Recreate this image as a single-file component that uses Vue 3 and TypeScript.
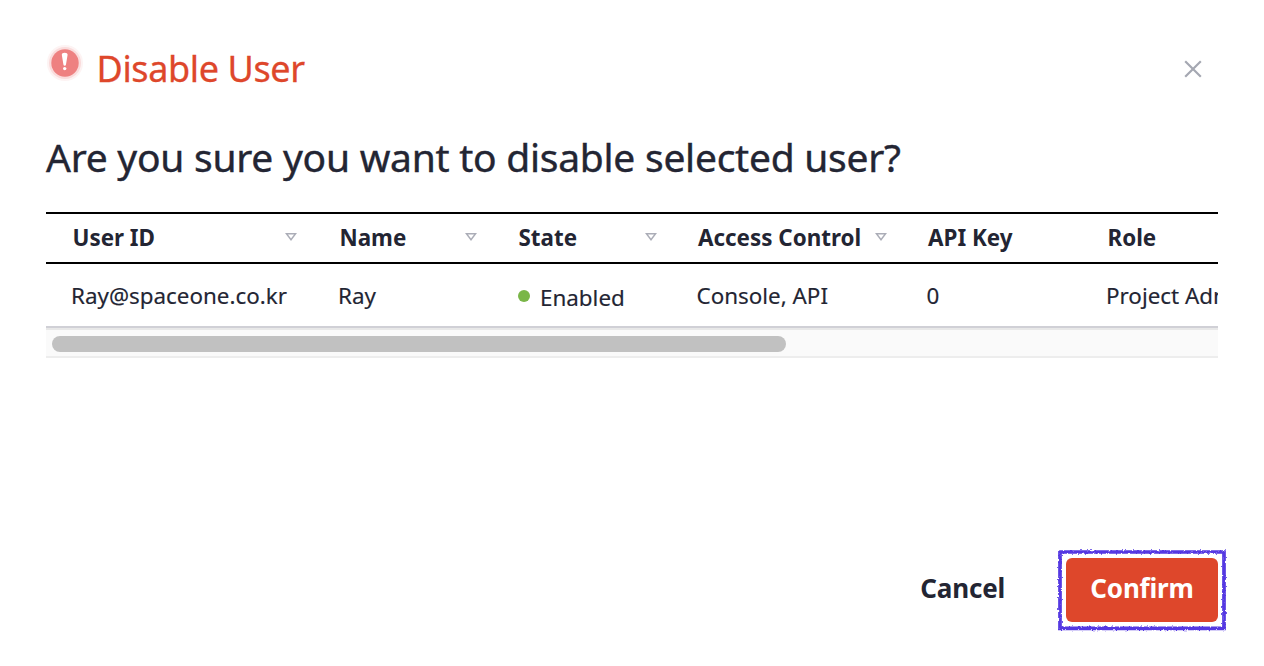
<script setup lang="ts">
interface Column {
  key: string
  label: string
  width: number
  sortable: boolean
}

const columns: Column[] = [
  { key: 'id', label: 'User ID', width: 267, sortable: true },
  { key: 'name', label: 'Name', width: 179, sortable: true },
  { key: 'state', label: 'State', width: 179.5, sortable: true },
  { key: 'access', label: 'Access Control', width: 230, sortable: true },
  { key: 'apiKey', label: 'API Key', width: 179.5, sortable: false },
  { key: 'role', label: 'Role', width: 300, sortable: false },
]

const user: Record<string, string> = {
  id: 'Ray@spaceone.co.kr',
  name: 'Ray',
  state: 'Enabled',
  access: 'Console, API',
  apiKey: '0',
  role: 'Project Admin',
}
</script>

<template>
  <section class="dialog" role="dialog">
    <header class="head">
      <svg class="alert" width="38" height="38" viewBox="0 0 38 38">
        <circle cx="19" cy="19" r="18" fill="#fdf3f3" />
        <circle cx="19" cy="19" r="16" fill="#fadcdc" />
        <circle cx="19" cy="19" r="13.7" fill="#ee8181" />
        <path d="M15.8 10.8Q15.8 8.8 18.7 8.8Q21.6 8.8 21.6 10.8L20 20.4Q19.8 21.7 18.7 21.7Q17.6 21.7 17.4 20.4Z" fill="#fff" />
        <circle cx="18.7" cy="24.6" r="1.7" fill="#fff" />
      </svg>
      <h1>Disable User</h1>
      <button class="close" aria-label="Close">
        <svg width="18" height="18" viewBox="0 0 18 18">
          <path d="M1.2 1.2L16.8 16.8M16.8 1.2L1.2 16.8" stroke="#a5a8b2" stroke-width="2.2" fill="none" />
        </svg>
      </button>
    </header>
    <h2>Are you sure you want to disable selected user?</h2>
    <div class="table">
      <div class="row labels">
        <div v-for="col in columns" :key="col.key" class="cell" :class="'label-' + col.key" :style="{ width: col.width + 'px' }">
          <span>{{ col.label }}</span>
          <svg v-if="col.sortable" class="sort" width="12" height="10" viewBox="0 0 12 10">
            <path d="M1.4 1.7H10.6L6 7.7Z" fill="none" stroke="#abadb7" stroke-width="1.5" />
          </svg>
        </div>
      </div>
      <div class="row values">
        <div v-for="col in columns" :key="col.key" class="cell" :class="col.key" :style="{ width: col.width + 'px' }">
          <i v-if="col.key === 'state'" class="dot"></i>
          <span>{{ user[col.key] }}</span>
        </div>
      </div>
      <div class="track"><div class="thumb"></div></div>
    </div>
    <footer class="actions">
      <button class="cancel">Cancel</button>
      <div class="marked">
        <button class="confirm">Confirm</button>
        <svg class="outline" width="176" height="88" viewBox="0 0 176 88">
          <defs>
            <filter id="rough" x="0" y="0" width="176" height="88" filterUnits="userSpaceOnUse">
              <feTurbulence type="fractalNoise" baseFrequency="0.45" numOctaves="2" seed="4" result="noise" />
              <feDisplacementMap in="SourceGraphic" in2="noise" scale="3" xChannelSelector="R" yChannelSelector="G" />
            </filter>
          </defs>
          <path d="M6 6H170V82.3H6Z" fill="none" stroke="#5539e2" stroke-width="3.7" filter="url(#rough)" />
        </svg>
      </div>
    </footer>
  </section>
</template>

<style>
body {
  margin: 0;
  background: #fff;
}
</style>

<style scoped>
.dialog {
  box-sizing: border-box;
  width: 1264px;
  height: 666px;
  padding: 44px 46px;
  display: flex;
  flex-direction: column;
  overflow: hidden;
  color: #232533;
  font-family: "Noto Sans", sans-serif;
}
button {
  border: 0;
  padding: 0;
  background: none;
  color: inherit;
  font-family: inherit;
}
.head {
  display: flex;
  align-items: flex-start;
  height: 50px;
}
.alert {
  flex: none;
}
h1 {
  margin: 0 0 0 12.5px;
  font-size: 36px;
  font-weight: 400;
  line-height: 50px;
  letter-spacing: -0.38px;
  -webkit-text-stroke: 0.3px currentColor;
  color: #de472b;
  flex: 1;
}
.close {
  display: flex;
  margin: 16px 16px 0 0;
}
h2 {
  margin: 36px 0 0;
  height: 82px;
  font-size: 39px;
  line-height: 54px;
  letter-spacing: -0.26px;
  -webkit-text-stroke: 0.4px currentColor;
  font-weight: 400;
  white-space: nowrap;
}
.table {
  width: 1172px;
  overflow: hidden;
}
.row {
  display: flex;
  box-sizing: border-box;
  width: 1360px;
  font-size: 22.4px;
  white-space: nowrap;
}
.cell {
  box-sizing: border-box;
  flex: none;
  display: flex;
  align-items: center;
}
.labels {
  height: 52px;
  padding-left: 26.5px;
  border-top: 2px solid #000;
  border-bottom: 2px solid #000;
  font-weight: 700;
}
.labels .cell {
  justify-content: space-between;
  padding: 0 41.5px 2px 0;
}
.labels .label-id {
  padding-right: 42.5px;
}
.labels .label-access {
  padding-right: 41px;
}
.sort {
  flex: none;
}
.values {
  height: 64px;
  padding-left: 25px;
  border-bottom: 2px solid #d0d0d6;
}
.values .cell {
  -webkit-text-stroke: 0.15px currentColor;
}
.values .state {
  padding: 5px 0 0 1px;
}
.dot {
  width: 12px;
  height: 12px;
  margin: -3px 10px 0 0;
  border-radius: 50%;
  background: #7ab648;
}
.track {
  box-sizing: border-box;
  height: 30px;
  padding: 6px;
  padding-top: 6px;
  border-top: 2px solid #e8e8e8;
  border-bottom: 2px solid #ededed;
  background: #fafafa;
}
.thumb {
  width: 734px;
  height: 16px;
  border-radius: 8px;
  background: #c1c1c1;
}
.actions {
  display: flex;
  justify-content: flex-end;
  align-items: flex-start;
  margin-top: auto;
  gap: 61px;
}
.cancel,
.confirm {
  font-size: 26px;
  font-weight: 700;
  line-height: 60px;
  letter-spacing: -0.2px;
}
.marked {
  position: relative;
}
.confirm {
  display: block;
  width: 152px;
  height: 64px;
  padding-bottom: 4px;
  border-radius: 6px;
  background: #de472b;
  color: #fff;
}
.outline {
  position: absolute;
  left: -12px;
  top: -12px;
  pointer-events: none;
}
</style>
